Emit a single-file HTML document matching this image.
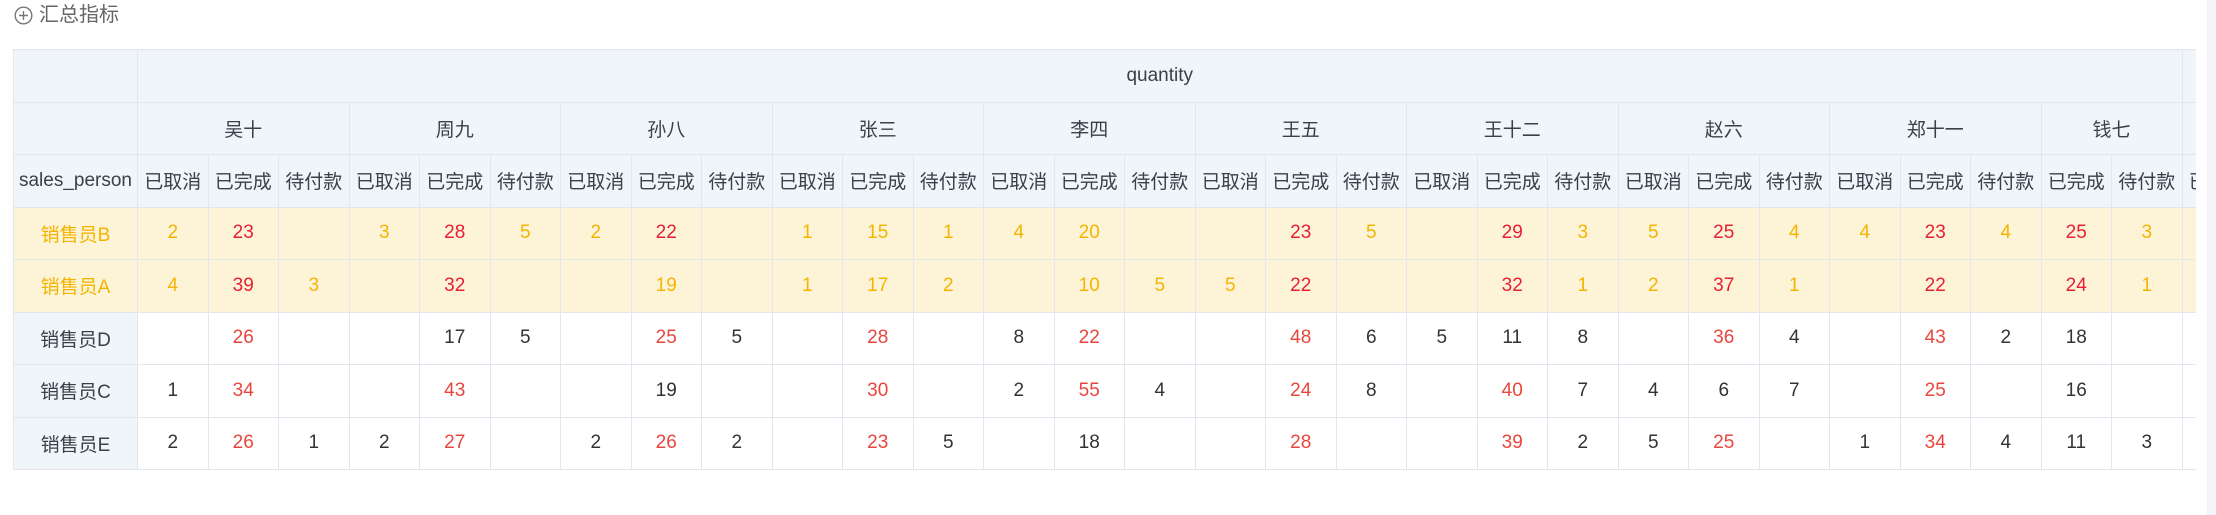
<!DOCTYPE html>
<html><head><meta charset="utf-8"><style>
body{margin:0;width:2216px;height:515px;background:#fff;overflow:hidden;font-family:"Liberation Sans","Noto Sans CJK SC",sans-serif;position:relative}
.title{position:absolute;left:14px;top:3px;font-size:20px;color:#666;line-height:24px;display:flex;align-items:center}
.title svg{margin-right:6px}
.wrap{position:absolute;left:13px;top:49px;width:2183px;height:421px;overflow:hidden}
table{border-collapse:collapse;table-layout:fixed;width:2240px}
td{border:1px solid #e3e6ee;text-align:center;font-size:19px;color:#333;height:51.5px;padding:0;white-space:nowrap;overflow:hidden}
.h td{background:#f0f5fa;color:#3a3f4a}
.y td{background:#fdf4d8;color:#f5b400}
.y td.r{color:#e81f33}
td.r{color:#e8463d}
td.n{background:#f0f5fa;color:#3a3f4a}
.y td.n{background:#fdf4d8;color:#f5b400}
.sb{position:absolute;left:2207px;top:0;width:9px;height:515px;background:#f4f5f7}
</style></head><body>
<div class="title"><svg width="19" height="19" viewBox="0 0 19 19"><circle cx="9.5" cy="9.5" r="8.3" fill="none" stroke="#777" stroke-width="1.4"/><path d="M9.5 5v9M5 9.5h9" stroke="#777" stroke-width="1.4"/></svg>汇总指标</div>
<div class="wrap"><table>
<colgroup><col style="width:124px"><col span="31" style="width:70.5px"></colgroup>
<tr class="h"><td></td><td colspan="29">quantity</td><td colspan="2"></td></tr>
<tr class="h"><td></td><td colspan="3">吴十</td><td colspan="3">周九</td><td colspan="3">孙八</td><td colspan="3">张三</td><td colspan="3">李四</td><td colspan="3">王五</td><td colspan="3">王十二</td><td colspan="3">赵六</td><td colspan="3">郑十一</td><td colspan="2">钱七</td><td colspan="2"></td></tr>
<tr class="h"><td>sales_person</td><td>已取消</td><td>已完成</td><td>待付款</td><td>已取消</td><td>已完成</td><td>待付款</td><td>已取消</td><td>已完成</td><td>待付款</td><td>已取消</td><td>已完成</td><td>待付款</td><td>已取消</td><td>已完成</td><td>待付款</td><td>已取消</td><td>已完成</td><td>待付款</td><td>已取消</td><td>已完成</td><td>待付款</td><td>已取消</td><td>已完成</td><td>待付款</td><td>已取消</td><td>已完成</td><td>待付款</td><td>已完成</td><td>待付款</td><td>已取消</td><td></td></tr>
<tr class="y"><td class="n">销售员B</td><td>2</td><td class="r">23</td><td></td><td>3</td><td class="r">28</td><td>5</td><td>2</td><td class="r">22</td><td></td><td>1</td><td>15</td><td>1</td><td>4</td><td>20</td><td></td><td></td><td class="r">23</td><td>5</td><td></td><td class="r">29</td><td>3</td><td>5</td><td class="r">25</td><td>4</td><td>4</td><td class="r">23</td><td>4</td><td class="r">25</td><td>3</td><td></td><td></td></tr>
<tr class="y"><td class="n">销售员A</td><td>4</td><td class="r">39</td><td>3</td><td></td><td class="r">32</td><td></td><td></td><td>19</td><td></td><td>1</td><td>17</td><td>2</td><td></td><td>10</td><td>5</td><td>5</td><td class="r">22</td><td></td><td></td><td class="r">32</td><td>1</td><td>2</td><td class="r">37</td><td>1</td><td></td><td class="r">22</td><td></td><td class="r">24</td><td>1</td><td></td><td></td></tr>
<tr><td class="n">销售员D</td><td></td><td class="r">26</td><td></td><td></td><td>17</td><td>5</td><td></td><td class="r">25</td><td>5</td><td></td><td class="r">28</td><td></td><td>8</td><td class="r">22</td><td></td><td></td><td class="r">48</td><td>6</td><td>5</td><td>11</td><td>8</td><td></td><td class="r">36</td><td>4</td><td></td><td class="r">43</td><td>2</td><td>18</td><td></td><td></td><td></td></tr>
<tr><td class="n">销售员C</td><td>1</td><td class="r">34</td><td></td><td></td><td class="r">43</td><td></td><td></td><td>19</td><td></td><td></td><td class="r">30</td><td></td><td>2</td><td class="r">55</td><td>4</td><td></td><td class="r">24</td><td>8</td><td></td><td class="r">40</td><td>7</td><td>4</td><td>6</td><td>7</td><td></td><td class="r">25</td><td></td><td>16</td><td></td><td></td><td></td></tr>
<tr><td class="n">销售员E</td><td>2</td><td class="r">26</td><td>1</td><td>2</td><td class="r">27</td><td></td><td>2</td><td class="r">26</td><td>2</td><td></td><td class="r">23</td><td>5</td><td></td><td>18</td><td></td><td></td><td class="r">28</td><td></td><td></td><td class="r">39</td><td>2</td><td>5</td><td class="r">25</td><td></td><td>1</td><td class="r">34</td><td>4</td><td>11</td><td>3</td><td></td><td></td></tr>
</table></div>
<div class="sb"></div>
</body></html>
